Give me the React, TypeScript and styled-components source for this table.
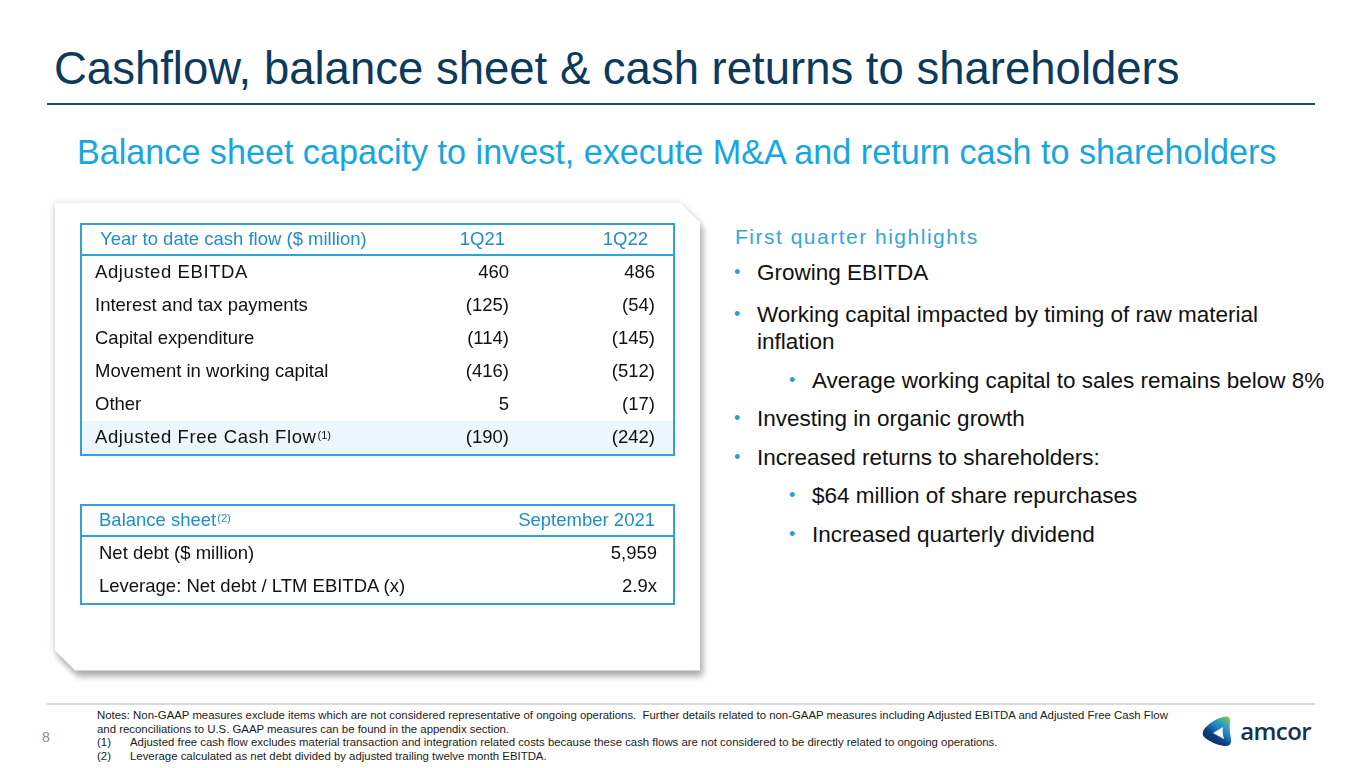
import React from 'react';
import styled, { createGlobalStyle } from 'styled-components';

const GlobalStyle = createGlobalStyle`
  html, body {
    margin: 0;
    padding: 0;
    background: #ffffff;
  }
  body {
    font-family: "Liberation Sans", Arial, sans-serif;
    color: #111111;
  }
`;

const Page = styled.div`
  width: 1365px;
  height: 768px;
  display: flex;
  flex-direction: column;
  overflow: hidden;
  background: #ffffff;
`;

const Header = styled.header`
  padding: 46px 50px 0 47px;
`;

const Title = styled.h1`
  margin: 0 0 0 7px;
  font-size: 45.5px;
  line-height: 46px;
  font-weight: 400;
  color: #0c3a5c;
  white-space: nowrap;
`;

const TitleRule = styled.div`
  margin-top: 11px;
  height: 2px;
  background: #1e4b6c;
`;

const Subtitle = styled.h2`
  margin: 30px 0 0 77px;
  font-size: 34.15px;
  line-height: 34.5px;
  font-weight: 400;
  color: #17a6e0;
  white-space: nowrap;
`;

const Main = styled.main`
  flex: 1;
  display: flex;
  gap: 33px;
  padding: 33px 0 0 55px;
`;

const Card = styled.div`
  width: 645px;
  height: 468px;
  filter: drop-shadow(3px 6px 3px rgba(0, 0, 0, 0.28)) drop-shadow(-1px 0 3px rgba(0, 0, 0, 0.14));
`;

const CardFace = styled.div`
  box-sizing: border-box;
  width: 100%;
  height: 100%;
  background: #ffffff;
  padding: 20px 25px;
  display: flex;
  flex-direction: column;
  gap: 48px;
  clip-path: polygon(0 0, calc(100% - 20px) 0, 100% 20px, 100% 100%, 20px 100%, 0 calc(100% - 20px));
`;

const TableBox = styled.div<{ $cols: string }>`
  border: 2px solid #2ea2d9;
  display: grid;
  grid-template-columns: ${({ $cols }) => $cols};
  font-size: 18.5px;
`;

const HeadCell = styled.div<{ $align?: 'left' | 'right'; $pad: number }>`
  height: 29px;
  display: flex;
  align-items: center;
  justify-content: ${({ $align }) => ($align === 'right' ? 'flex-end' : 'flex-start')};
  border-bottom: 2px solid #2ea2d9;
  color: #1e8ecb;
  ${({ $align, $pad }) => ($align === 'right' ? `padding-right: ${$pad}px;` : `padding-left: ${$pad}px;`)}
  white-space: nowrap;
`;

const BodyCell = styled.div<{ $align?: 'left' | 'right'; $pad: number; $shaded?: boolean; $spaced?: boolean }>`
  height: 33px;
  display: flex;
  align-items: center;
  justify-content: ${({ $align }) => ($align === 'right' ? 'flex-end' : 'flex-start')};
  background: ${({ $shaded }) => ($shaded ? '#ebf7fc' : 'transparent')};
  letter-spacing: ${({ $spaced }) => ($spaced ? '0.6px' : '0')};
  ${({ $align, $pad }) => ($align === 'right' ? `padding-right: ${$pad}px;` : `padding-left: ${$pad}px;`)}
  white-space: nowrap;
`;

const Sup = styled.sup`
  font-size: 11px;
  letter-spacing: 0;
  line-height: 0;
  margin-left: 1px;
  position: relative;
  top: -2px;
`;

const Highlights = styled.section`
  padding-top: 23px;
`;

const HighlightsTitle = styled.h3`
  margin: 0 0 12px 2px;
  font-size: 21px;
  line-height: 1;
  font-weight: 400;
  letter-spacing: 1.5px;
  color: #37a5d8;
`;

const BulletList = styled.ul`
  list-style: none;
  margin: 0;
  padding: 0;
  display: flex;
  flex-direction: column;
  gap: 11.5px;
`;

const Bullet = styled.li<{ $level?: number }>`
  position: relative;
  padding-left: ${({ $level }) => ($level === 2 ? 79 : 24)}px;
  font-size: 22.5px;
  line-height: 27px;
  color: #111111;
  max-width: ${({ $level }) => ($level === 2 ? 640 : 540)}px;

  &:first-child {
    margin-bottom: 4px;
  }

  &::before {
    content: '•';
    position: absolute;
    left: ${({ $level }) => ($level === 2 ? 56 : 1)}px;
    top: 0;
    font-size: 18px;
    color: #2a9fd6;
  }
`;

const FooterRule = styled.div`
  margin: 0 50px 0 47px;
  height: 2px;
  background: #dadada;
`;

const FooterRow = styled.footer`
  height: 63px;
  display: grid;
  grid-template-columns: 57px 1fr auto;
  padding: 0 54px 0 40px;
`;

const PageNum = styled.div`
  font-size: 14px;
  color: #8e8e8e;
  padding-top: 24px;
  padding-left: 2px;
`;

const Notes = styled.div`
  padding-top: 4px;
  font-size: 11.4px;
  line-height: 13.5px;
  color: #1a1a1a;
  white-space: nowrap;
`;

const NoteRow = styled.div`
  display: grid;
  grid-template-columns: 33px auto;
`;

const Logo = styled.div`
  display: flex;
  align-items: center;
  gap: 8px;
  padding-top: 11px;
  align-self: start;
`;

const LogoWord = styled.span`
  font-family: "Open Sans", "Noto Sans", sans-serif;
  font-weight: 600;
  font-size: 24px;
  line-height: 1;
  color: #17304f;
  letter-spacing: -0.6px;
  position: relative;
  top: -1px;
`;

const cashRows = [
  { label: 'Adjusted EBITDA', a: '460', b: '486', spaced: true },
  { label: 'Interest and tax payments', a: '(125)', b: '(54)' },
  { label: 'Capital expenditure', a: '(114)', b: '(145)' },
  { label: 'Movement in working capital', a: '(416)', b: '(512)' },
  { label: 'Other', a: '5', b: '(17)' },
];

const AmcorMark = () => (
  <svg width="31" height="31" viewBox="0 0 31 31">
    <defs>
      <linearGradient id="amcorGrad" x1="0.1" y1="0.9" x2="0.75" y2="0">
        <stop offset="0" stopColor="#0a2a5c" />
        <stop offset="0.35" stopColor="#0f3f80" />
        <stop offset="0.62" stopColor="#1f86c8" />
        <stop offset="0.85" stopColor="#3aa7b6" />
        <stop offset="1" stopColor="#72c145" />
      </linearGradient>
    </defs>
    <path
      d="M4 12 Q0 17 3 21 Q11 28 23 30 Q31 31 30 23 Q28 13 29 5 Q29 -1 22 1 Q11 4 4 12 Z M12 17 L22 11 Q21 17 23 23 Z"
      fill="url(#amcorGrad)"
      fillRule="evenodd"
    />
  </svg>
);

export default function App() {
  return (
    <>
      <GlobalStyle />
      <Page>
        <Header>
          <Title>Cashflow, balance sheet &amp; cash returns to shareholders</Title>
          <TitleRule />
        </Header>
        <Subtitle>Balance sheet capacity to invest, execute M&amp;A and return cash to shareholders</Subtitle>

        <Main>
          <Card>
            <CardFace>
              <TableBox $cols="1fr 90px 146px">
                <HeadCell $pad={18}>Year to date cash flow ($ million)</HeadCell>
                <HeadCell $align="right" $pad={22}>1Q21</HeadCell>
                <HeadCell $align="right" $pad={25}>1Q22</HeadCell>
                {cashRows.map((r) => (
                  <React.Fragment key={r.label}>
                    <BodyCell $pad={13} $spaced={r.spaced}>{r.label}</BodyCell>
                    <BodyCell $align="right" $pad={18}>{r.a}</BodyCell>
                    <BodyCell $align="right" $pad={18}>{r.b}</BodyCell>
                  </React.Fragment>
                ))}
                <BodyCell $pad={13} $shaded $spaced>
                  Adjusted Free Cash Flow<Sup>(1)</Sup>
                </BodyCell>
                <BodyCell $align="right" $pad={18} $shaded>(190)</BodyCell>
                <BodyCell $align="right" $pad={18} $shaded>(242)</BodyCell>
              </TableBox>

              <TableBox $cols="1fr auto">
                <HeadCell $pad={17}>
                  Balance sheet<Sup>(2)</Sup>
                </HeadCell>
                <HeadCell $align="right" $pad={18}>September 2021</HeadCell>
                <BodyCell $pad={17}>Net debt ($ million)</BodyCell>
                <BodyCell $align="right" $pad={16}>5,959</BodyCell>
                <BodyCell $pad={17}>Leverage: Net debt / LTM EBITDA (x)</BodyCell>
                <BodyCell $align="right" $pad={16}>2.9x</BodyCell>
              </TableBox>
            </CardFace>
          </Card>

          <Highlights>
            <HighlightsTitle>First quarter highlights</HighlightsTitle>
            <BulletList>
              <Bullet>Growing EBITDA</Bullet>
              <Bullet>Working capital impacted by timing of raw material inflation</Bullet>
              <Bullet $level={2}>Average working capital to sales remains below 8%</Bullet>
              <Bullet>Investing in organic growth</Bullet>
              <Bullet>Increased returns to shareholders:</Bullet>
              <Bullet $level={2}>$64 million of share repurchases</Bullet>
              <Bullet $level={2}>Increased quarterly dividend</Bullet>
            </BulletList>
          </Highlights>
        </Main>

        <FooterRule />
        <FooterRow>
          <PageNum>8</PageNum>
          <Notes>
            <div>
              Notes: Non-GAAP measures exclude items which are not considered representative of ongoing operations.&nbsp; Further details related to non-GAAP measures including Adjusted EBITDA and Adjusted Free Cash Flow
            </div>
            <div>and reconciliations to U.S. GAAP measures can be found in the appendix section.</div>
            <NoteRow>
              <span>(1)</span>
              <span>Adjusted free cash flow excludes material transaction and integration related costs because these cash flows are not considered to be directly related to ongoing operations.</span>
            </NoteRow>
            <NoteRow>
              <span>(2)</span>
              <span>Leverage calculated as net debt divided by adjusted trailing twelve month EBITDA.</span>
            </NoteRow>
          </Notes>
          <Logo>
            <AmcorMark />
            <LogoWord>amcor</LogoWord>
          </Logo>
        </FooterRow>
      </Page>
    </>
  );
}
